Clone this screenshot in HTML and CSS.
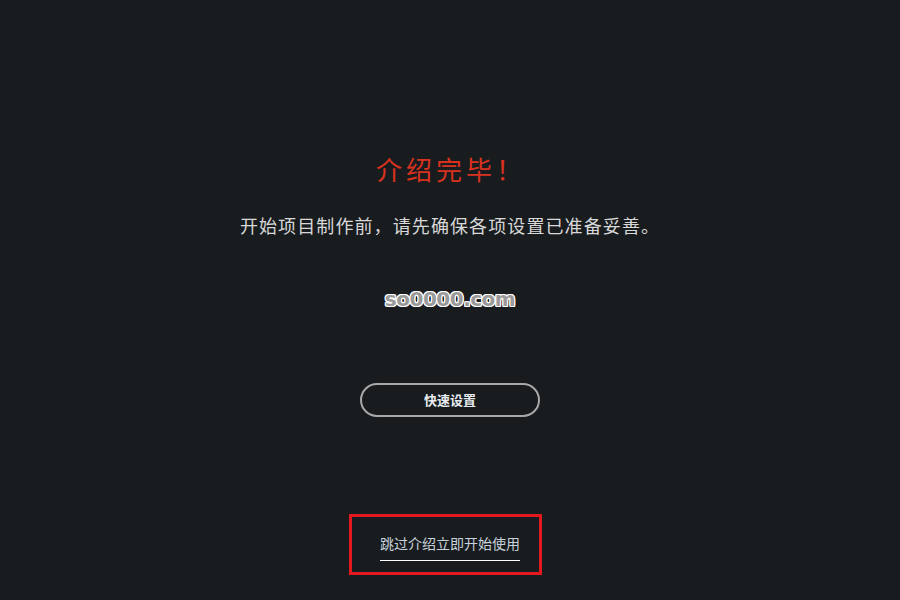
FILE: index.html
```html
<!DOCTYPE html>
<html>
<head>
    <title>介绍完毕</title>
    <link rel="stylesheet" href="styles.css">
</head>
<body>
    <div class="page">
        <h1 class="title">介绍完毕！</h1>
        <p class="lead">开始项目制作前，请先确保各项设置已准备妥善。</p>
        <div class="brand">so0000.com</div>
        <button class="btn-setup">快速设置</button>
        <div class="skip-box">
            <a class="skip" href="#">跳过介绍立即开始使用</a>
        </div>
    </div>
</body>
</html>
```

FILE: styles.css
```css
html, body { margin: 0; height: 100%; background: #181c1f; }
body { font-family: "Noto Sans CJK SC", "Noto Sans", sans-serif; color: #d4d6d8; }
.page { display: flex; flex-direction: column; align-items: center; padding-top: 150px; }
.title { margin: 0; font-size: 26px; font-weight: 400; color: #d8321f; letter-spacing: 4px; line-height: 38px; padding-left: 2px; }
.lead { margin: 24px 0 0; font-size: 18px; letter-spacing: 1.1px; line-height: 26px; color: #d8d8d8; }
.brand { margin-top: 49px; font-family: "DejaVu Sans", sans-serif; font-weight: bold; font-size: 20px; line-height: 24px; color: #9a9a9a; letter-spacing: -0.5px;
    text-shadow: 1px 0 #fff, -1px 0 #fff, 0 1px #fff, 0 -1px #fff, 1px 1px #fff, -1px -1px #fff, 1px -1px #fff, -1px 1px #fff; }
.btn-setup { margin-top: 72px; width: 180px; height: 34px; padding: 0 0 2px; border: 2px solid #a8a8a8; border-radius: 17px; background: transparent; color: #e8ecf0; font-family: "Noto Sans CJK SC", sans-serif; font-size: 13px; font-weight: bold; cursor: pointer; }
.skip-box { margin: 97px 10px 0 0; width: 187px; height: 49px; padding-top: 6px; border: 3px solid #e3191f; display: flex; justify-content: center; }
.skip { display: block; height: 27px; margin: 9px 0 0 10px; color: #c8d2dc; font-size: 14px; text-decoration: none; border-bottom: 1px solid #fff; line-height: 20px; padding-top: 1px; }
```
